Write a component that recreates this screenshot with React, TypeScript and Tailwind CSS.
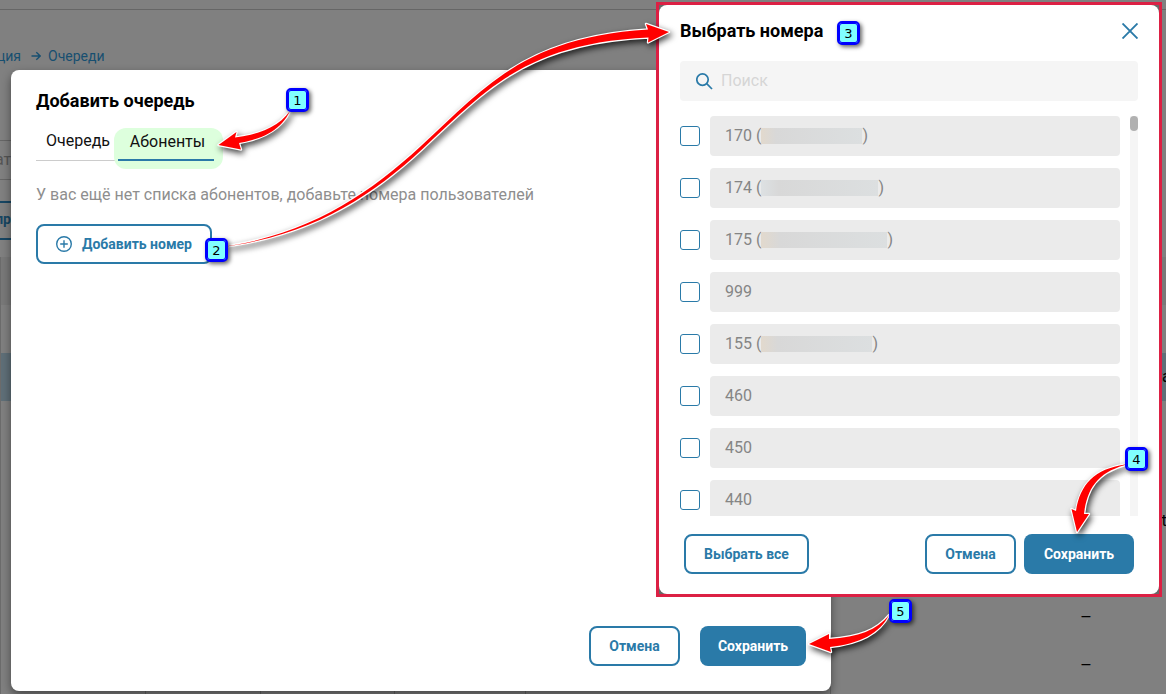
import React from "react";

const outlineButton =
  "h-10 rounded-[8px] border-2 border-[#2a7aa8] bg-white text-sm font-bold text-[#2a7aa8]";
const solidButton =
  "h-10 rounded-[8px] bg-[#2a7aa8] text-sm font-bold text-white";

type Entry = { number: string; masked?: string };

const entries: Entry[] = [
  { number: "170", masked: "w-[101px] from-[#e2d9cd]" },
  { number: "174", masked: "w-[117px] from-[#dde1e3]" },
  { number: "175", masked: "w-[126px] from-[#e2d9cd]" },
  { number: "999" },
  { number: "155", masked: "w-[111px] from-[#e2d9cd]" },
  { number: "460" },
  { number: "450" },
  { number: "440" },
];

const tableRows = [
  { dash: "", tail: "" },
  { dash: "", tail: "та", active: true },
  { dash: "", tail: "" },
  { dash: "", tail: "" },
  { dash: "", tail: "t" },
  { dash: "", tail: "" },
  { dash: "–", tail: "" },
  { dash: "–", tail: "" },
  { dash: "", tail: "" },
];

function Background() {
  return (
    <div className="h-full overflow-hidden bg-[#808080]">
      <header className="h-[10px] border-b border-[#666666]" />
      <nav className="mt-9 flex h-5 items-center text-sm text-[#174f70]">
        <a href="#section" className="flex w-[21px] justify-end">ция</a>
        <svg viewBox="0 0 10 10" className="ml-[10px] h-[10px] w-[10px]" fill="none" stroke="currentColor" strokeWidth="1.4">
          <path d="M0.5 5H9M5.3 1.2L9.2 5L5.3 8.8" />
        </svg>
        <a href="#queues" className="ml-[7px]">Очереди</a>
      </nav>
      <div className="mt-[74px] flex h-10 w-64 items-center border-y border-[#666666] text-base text-[#555555]">
        <span className="flex w-5 justify-end">ать</span>
      </div>
      <div className="mt-[21px] flex h-[39px] w-64 items-center border-y-2 border-[#174663] pb-1 text-sm font-bold text-[#174663]">
        <span className="flex w-[11px] justify-end">пр</span>
      </div>
      <table className="mt-[17px] w-[1280px] table-fixed border-collapse border-l border-[#6b6b6b] text-base text-black">
        <colgroup>
          <col className="w-[145px]" />
          <col className="w-[115px]" />
          <col className="w-[134px]" />
          <col className="w-[131px]" />
          <col className="w-[305px]" />
          <col className="w-[315px]" />
          <col />
        </colgroup>
        <thead>
          <tr className="h-12 bg-[#797979]"><th colSpan={7} /></tr>
        </thead>
        <tbody>
          {tableRows.map((row, i) => (
            <tr key={i} className={row.active ? "h-12 bg-[#5f6f78]" : "h-12"}>
              <td className="border-r border-[#666666]" />
              <td className="border-r border-[#666666]" />
              <td className="border-r border-[#666666]" />
              <td className="border-r border-[#666666]" />
              <td className="border-r border-[#666666]" />
              <td className="p-0 pr-[55px] pb-[2px] text-right font-['Liberation_Sans',sans-serif]">{row.dash}</td>
              <td className="p-0 pl-4">
                <span className={row.active ? "-ml-[7px]" : ""}>{row.tail}</span>
              </td>
            </tr>
          ))}
        </tbody>
      </table>
    </div>
  );
}

function QueueDialog() {
  return (
    <section className="flex h-full w-full max-w-[820px] flex-col rounded-[8px] bg-white p-[25px] shadow-[0_4px_10px_rgba(0,0,0,0.45)]">
      <h2 className="-mt-1 text-lg leading-5 font-bold text-black">Добавить очередь</h2>
      <div className="mt-4 flex h-[34px] items-stretch text-base text-[#111111]">
        <button className="w-[82px] border-b border-[#cccccc] pt-1 pb-[14px] pl-[2px] leading-5">Очередь</button>
        <div className="mt-px -mr-[9px] -mb-2 -ml-1 rounded-[12px] bg-[#ddffdd] pr-[9px] pb-2 pl-1">
          <button className="h-full w-24 border-b-2 border-[#2a7aa8] pt-1 pb-2 pl-[3px] leading-5">Абоненты</button>
        </div>
      </div>
      <p className="mt-6 text-base leading-5 text-[#8e8e8e]">
        У вас ещё нет списка абонентов, добавьте номера пользователей
      </p>
      <button className={`${outlineButton} mt-[19px] flex w-[176px] shrink-0 items-center gap-[10px] pl-[18px]`}>
        <svg viewBox="0 0 16 16" className="h-4 w-4" fill="none" stroke="currentColor" strokeWidth="1.4">
          <circle cx="8" cy="8" r="7.3" />
          <path d="M8 4.2V11.8M4.2 8H11.8" />
        </svg>
        Добавить номер
      </button>
      <div className="mt-auto flex justify-end gap-5">
        <button className={`${outlineButton} w-[91px]`}>Отмена</button>
        <button className={`${solidButton} w-[106px]`}>Сохранить</button>
      </div>
    </section>
  );
}

function NumberRow({ entry }: { entry: Entry }) {
  return (
    <li className="flex items-center gap-[10px]">
      <input
        id={`n${entry.number}`}
        type="checkbox"
        className="h-5 w-5 shrink-0 appearance-none rounded-[3px] border border-[#2a7aa8] bg-white"
      />
      <label
        htmlFor={`n${entry.number}`}
        className="flex h-10 flex-1 items-center rounded-[4px] bg-[#ebebeb] pl-[15px] text-base text-[#858585]"
      >
        {entry.number}
        {entry.masked && (
          <>
            <span className="ml-1">(</span>
            <span className={`${entry.masked} h-4 bg-linear-to-r via-[#d8d8d8] via-15% to-[#dcdfe0]`} />
            <span>)</span>
          </>
        )}
      </label>
    </li>
  );
}

function NumbersDialog() {
  return (
    <section className="w-[506px] border-[3px] border-[#dc2044] bg-[#686868]">
      <div className="rounded-[8px] bg-white px-[21px] pt-4 pb-5">
        <div className="flex h-5 items-center justify-between">
          <h2 className="text-lg leading-5 font-bold text-black">Выбрать номера</h2>
          <button aria-label="Закрыть">
            <svg viewBox="0 0 16 16" className="h-4 w-4" fill="none" stroke="#2a7aa8" strokeWidth="1.9">
              <path d="M0.5 0.5L15.5 15.5M15.5 0.5L0.5 15.5" />
            </svg>
          </button>
        </div>
        <label className="mt-5 flex h-10 items-center gap-2 rounded-[4px] bg-[#f5f5f5] pl-4">
          <svg viewBox="0 0 17 17" className="h-[17px] w-[17px] shrink-0" fill="none" stroke="#2a7aa8" strokeWidth="1.7">
            <circle cx="6.5" cy="6.6" r="5.7" />
            <path d="M10.700 10.700L16 16" />
          </svg>
          <input
            type="text"
            aria-label="Поиск"
            placeholder="Поиск"
            className="w-full bg-transparent text-base outline-none placeholder:text-[#d6d6d6]"
          />
        </label>
        <div className="mt-[15px] flex h-[400px] gap-[10px] overflow-hidden">
          <ul className="flex flex-1 flex-col gap-3">
            {entries.map((entry) => (
              <NumberRow key={entry.number} entry={entry} />
            ))}
          </ul>
          <div className="w-2 bg-[#f5f5f5]">
            <div className="h-[15px] rounded-full bg-[#b1b1b1]" />
          </div>
        </div>
        <div className="mt-[18px] flex gap-2 px-1">
          <button className={`${outlineButton} mr-auto w-[125px]`}>Выбрать все</button>
          <button className={`${outlineButton} w-[91px]`}>Отмена</button>
          <button className={`${solidButton} w-[110px]`}>Сохранить</button>
        </div>
      </div>
    </section>
  );
}

function Badge({ value, place }: { value: string; place: string }) {
  return (
    <span
      className={`${place} absolute flex h-6 w-[23px] items-center justify-center rounded-[5px] border-2 border-[#0000ff] bg-[#80ffff] font-['DejaVu_Sans'] text-[13px] leading-none text-black shadow-[2px_2px_4px_rgba(0,0,0,0.6)] ring-1 ring-[#0000ff] ring-inset`}
    >
      {value}
    </span>
  );
}

function Arrows() {
  return (
    <svg
      viewBox="0 0 1166 694"
      className="absolute top-0 left-0 h-[694px] w-[1166px] drop-shadow-[2px_3px_3px_rgba(0,0,0,0.75)]"
      fill="#ff0000"
      stroke="#ffffff"
      strokeWidth="2.4"
      strokeLinejoin="round"
      paintOrder="stroke"
    >
      <path d="M290 111C279 126 262 134 235 137.500L236.500 132L218.500 145L241 149.500L239 143C263 139 281 130 290 111Z" />
      <path d="M228 246C311 233 369 194 421 146C485 87 525 37 648 29.500L646 24L669 32L648 42.500L648.500 37.500C525 43 484 92 423 148.500C371 197 313 234 228 246.300Z" />
      <path d="M1125 464.500C1095 469 1080 484 1076 511L1071.500 509L1077 532L1089 514L1084 514C1087 489 1097 473 1125 465Z" />
      <path d="M889 615C877 630 859 637 829 639L829 634L809 644L831 652L830 647C860 644 880 633 889 615Z" />
    </svg>
  );
}

export default function App() {
  return (
    <main className="relative h-screen overflow-hidden font-['Roboto',sans-serif]">
      <Background />
      <div className="absolute inset-0 pt-[70px] pb-[3px] pl-[11px]">
        <QueueDialog />
      </div>
      <div className="absolute top-[2px] left-[656px]">
        <NumbersDialog />
      </div>
      <div className="pointer-events-none absolute top-0 left-0">
        <Arrows />
        <Badge value="1" place="top-[88px] left-[286px]" />
        <Badge value="2" place="top-[238px] left-[205px]" />
        <Badge value="3" place="top-[21px] left-[837px]" />
        <Badge value="4" place="top-[447px] left-[1125px]" />
        <Badge value="5" place="top-[599px] left-[889px]" />
      </div>
    </main>
  );
}
